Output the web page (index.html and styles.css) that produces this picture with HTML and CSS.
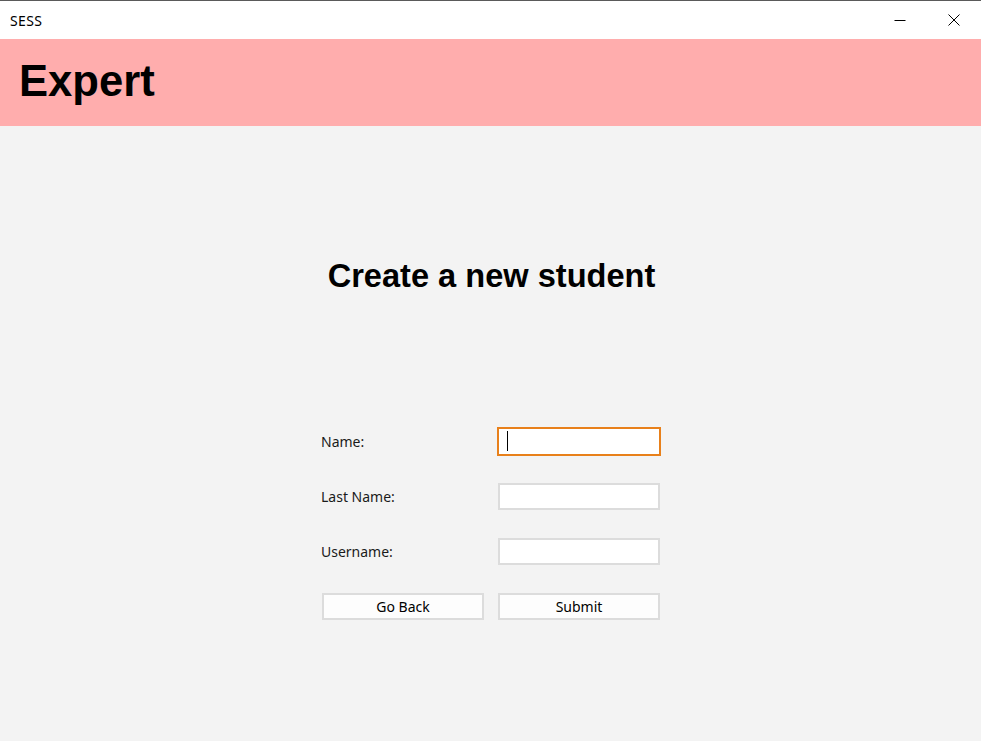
FILE: index.html
```html
<!DOCTYPE html>
<html lang="en">
<head>
<meta charset="utf-8">
<title>SESS</title>
<link rel="stylesheet" href="styles.css">
</head>
<body>
<div class="window">
  <div class="titlebar">
    <span class="app-title">SESS</span>
    <div class="win-controls">
      <span class="win-btn">
        <svg width="12" height="12" viewBox="0 0 12 12"><path d="M0.5 6.5H11.5" stroke="#000" stroke-width="1"/></svg>
      </span>
      <span class="win-btn">
        <svg width="12" height="12" viewBox="0 0 12 12"><path d="M0.5 0.5L11.5 11.5M11.5 0.5L0.5 11.5" stroke="#000" stroke-width="1"/></svg>
      </span>
    </div>
  </div>
  <header class="banner">
    <h1 class="banner-title">Expert</h1>
  </header>
  <main class="content">
    <h2 class="page-title">Create a new student</h2>
    <form class="form-grid">
      <label class="form-label" for="name">Name:</label>
      <div class="field focused">
        <input id="name" class="text-input" type="text">
        <span class="caret"></span>
      </div>
      <label class="form-label" for="lastname">Last Name:</label>
      <div class="field">
        <input id="lastname" class="text-input" type="text">
      </div>
      <label class="form-label" for="username">Username:</label>
      <div class="field">
        <input id="username" class="text-input" type="text">
      </div>
      <button type="button" class="btn">Go Back</button>
      <button type="button" class="btn">Submit</button>
    </form>
  </main>
</div>
</body>
</html>
```

FILE: styles.css
```css
* { box-sizing: border-box; }
html, body { margin: 0; padding: 0; }
body {
  width: 981px;
  height: 741px;
  overflow: hidden;
  background: #f3f3f3;
  font-family: "Noto Sans", "Open Sans", sans-serif;
  color: #1a1a1a;
}
.window {
  display: flex;
  flex-direction: column;
  height: 741px;
  border-top: 1px solid #5a5a5a;
}
.titlebar {
  height: 38px;
  background: #ffffff;
  display: flex;
  align-items: center;
  justify-content: space-between;
  padding-left: 10px;
}
.app-title {
  font-size: 14px;
  color: #000;
  letter-spacing: 0.4px;
}
.win-controls {
  display: flex;
  height: 100%;
}
.win-btn {
  width: 54px;
  height: 100%;
  display: flex;
  align-items: center;
  justify-content: center;
}
.win-btn svg { display: block; }
.banner {
  height: 87px;
  background: #ffadad;
  display: flex;
  align-items: center;
  padding-left: 19px;
}
.banner-title {
  margin: 0;
  font-family: "Liberation Sans", Arial, sans-serif;
  font-weight: bold;
  font-size: 43.6px;
  color: #000;
  line-height: 1;
  padding-bottom: 2px;
}
.content {
  flex: 1;
  display: flex;
  flex-direction: column;
  align-items: center;
  padding-top: 131px;
}
.page-title {
  margin: 0;
  font-family: "Liberation Sans", Arial, sans-serif;
  font-weight: bold;
  font-size: 32.6px;
  line-height: 37px;
  color: #000;
  margin-left: 2px;
}
.form-grid {
  margin-top: 134px;
  display: grid;
  grid-template-columns: 162px 162px;
  grid-auto-rows: 27px;
  column-gap: 14px;
  row-gap: 28px;
  margin-left: 1px;
}
.form-label {
  display: flex;
  align-items: center;
  font-size: 14px;
  margin-left: -1px;
  color: #1a1a1a;
}
.field {
  position: relative;
  display: flex;
}
.text-input {
  width: 100%;
  height: 27px;
  margin: 0;
  border: 2px solid #dcdcdc;
  background: #ffffff;
  outline: none;
  padding: 0 6px;
  font-family: inherit;
  font-size: 14px;
}
.focused .text-input {
  width: 164px;
  height: 29px;
  margin: -1px;
  border-color: #e8801a;
}
.caret {
  position: absolute;
  left: 9px;
  top: 3px;
  width: 1px;
  height: 20px;
  background: #000;
}
.btn {
  height: 27px;
  margin: 0;
  border: 2px solid #dcdcdc;
  background: #fdfdfd;
  font-family: inherit;
  font-size: 14px;
  color: #000;
  padding: 0;
  line-height: 1;
}
```
